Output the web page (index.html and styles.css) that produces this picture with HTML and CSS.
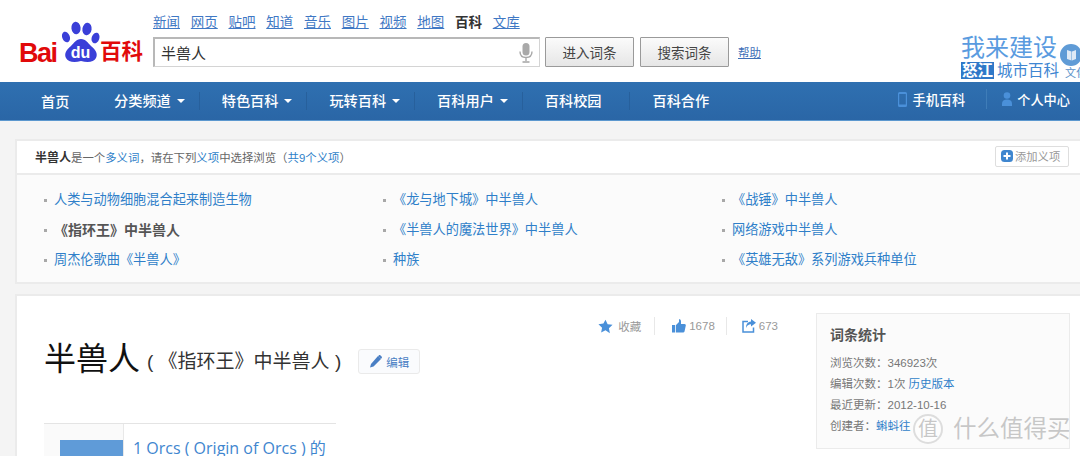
FILE: index.html
```html
<!DOCTYPE html>
<html lang="zh-CN">
<head>
  <meta charset="UTF-8">
  <title>半兽人_百度百科</title>
  <link rel="stylesheet" href="styles.css">
</head>
<body>
  <div class="page">
    <div class="top">
      <a class="logo">
        <span class="logo-bai">Bai</span>
        <span class="logo-paw">
          <svg width="39" height="42" viewBox="0 0 39 42">
            <g fill="#3a3fd8">
              <ellipse cx="5" cy="16" rx="3.800" ry="5.500" transform="rotate(-20 5 16)"/>
              <ellipse cx="15" cy="7" rx="4.600" ry="6.300" transform="rotate(-6 15 7)"/>
              <ellipse cx="26" cy="8" rx="4.600" ry="6.300" transform="rotate(8 26 8)"/>
              <ellipse cx="34.500" cy="17" rx="3.800" ry="5.500" transform="rotate(18 34.500 17)"/>
              <path d="M20 18c5 0 7 4 10 7 5 4 7 8 5 12-2 4-8 5-15 3-7 2-13 1-15-3-2-4 0-8 5-12 3-3 5-7 10-7z"/>
            </g>
          </svg>
          <span class="logo-du">du</span>
        </span>
        <span class="logo-bk">百科</span>
      </a>
      <div class="search-col">
        <div class="channels">
          <a>新闻</a><a>网页</a><a>贴吧</a><a>知道</a><a>音乐</a><a>图片</a><a>视频</a><a>地图</a><b>百科</b><a>文库</a>
        </div>
        <div class="search-row">
          <div class="search-box">
            <span>半兽人</span>
            <svg width="14" height="20" viewBox="0 0 14 20" fill="none">
              <rect x="3.500" y="0" width="7" height="12.500" rx="3.500" fill="#a9a9a9"/>
              <path d="M1 8.500c0 4 2.500 6 6 6s6-2 6-6M7 14.500V18" stroke="#a9a9a9" stroke-width="1.400"/>
              <path d="M3.500 19h7" stroke="#a9a9a9" stroke-width="1.600"/>
            </svg>
          </div>
          <button class="btn">进入词条</button>
          <button class="btn">搜索词条</button>
          <a class="help">帮助</a>
        </div>
      </div>
      <div class="promo">
        <div class="promo-text">
          <div class="promo-big">我来建设</div>
          <div class="promo-small"><span class="promo-city">怒江</span>城市百科</div>
        </div>
        <div class="promo-side">
          <span class="promo-dot">
            <svg width="11" height="12" viewBox="0 0 11 12"><path d="M1 1l4.500 1.500V11.500L1 10zM6 2.500L10 1v9l-4 1.500z" fill="#dfeaf6"/></svg>
          </span>
          <span class="promo-label">文化</span>
        </div>
      </div>
    </div>

    <div class="nav">
      <a class="nav-home">首页</a>
      <a class="nav-item">分类频道<i class="caret"></i></a>
      <a class="nav-item">特色百科<i class="caret"></i></a>
      <a class="nav-item">玩转百科<i class="caret"></i></a>
      <a class="nav-item">百科用户<i class="caret"></i></a>
      <a class="nav-item">百科校园</a>
      <a class="nav-item nav-last">百科合作</a>
      <div class="nav-right">
        <a class="nav-user nav-phone">
          <svg width="9" height="15" viewBox="0 0 9 15"><path d="M1.500 0h6A1.500 1.500 0 0 1 9 1.500v12A1.500 1.500 0 0 1 7.500 15h-6A1.500 1.500 0 0 1 0 13.500v-12A1.500 1.500 0 0 1 1.500 0zM1.200 2v10.500h6.600V2z" fill="#4a90d9"/></svg>
          手机百科
        </a>
        <a class="nav-user nav-center">
          <svg width="10" height="14" viewBox="0 0 10 14"><circle cx="5" cy="3.500" r="3.300" fill="#4a90d9"/><path d="M0 14v-2.500C0 9 2 7.500 5 7.500s5 1.500 5 4V14z" fill="#4a90d9"/></svg>
          个人中心
        </a>
      </div>
    </div>

    <div class="content">
      <div class="card poly">
        <div class="poly-head">
          <p><b>半兽人</b>是一个<a>多义词</a>，请在下列<a>义项</a>中选择浏览（<a>共9个义项</a>）</p>
          <span class="add-btn">
            <svg width="12" height="12" viewBox="0 0 12 12"><rect width="12" height="12" rx="3.500" fill="#3f86cf"/><path d="M6 2.500v7M2.500 6h7" stroke="#fff" stroke-width="2"/></svg>
            添加义项
          </span>
        </div>
        <ul class="poly-list">
          <li><a>人类与动物细胞混合起来制造生物</a></li>
          <li><a>《龙与地下城》中半兽人</a></li>
          <li><a>《战锤》中半兽人</a></li>
          <li><b>《指环王》中半兽人</b></li>
          <li><a>《半兽人的魔法世界》中半兽人</a></li>
          <li><a>网络游戏中半兽人</a></li>
          <li><a>周杰伦歌曲《半兽人》</a></li>
          <li><a>种族</a></li>
          <li><a>《英雄无敌》系列游戏兵种单位</a></li>
        </ul>
      </div>

      <div class="card article">
        <div class="article-main">
          <div class="actions">
            <span class="action act-fav">
              <svg width="15" height="15" viewBox="0 0 24 24"><path d="M12 1l3.400 7.300 7.900 1-5.800 5.500 1.500 7.900L12 18l-7 3.700 1.500-7.900L.7 8.300l7.900-1z" fill="#4a90d9"/></svg>
              收藏
            </span>
            <span class="action act-like">
              <svg width="14" height="14" viewBox="0 0 14 14"><path d="M0 6h3v7.500H0zM3.800 6.200L7 3V.5C7 0 9 0 9 2.500V5h3.500c1 0 1.500.8 1.300 1.600L12.500 12.500c-.2.700-.7 1-1.300 1H3.800z" fill="#4a90d9"/></svg>
              1678
            </span>
            <span class="action act-share">
              <svg width="14" height="14" viewBox="0 0 14 14" fill="none"><path d="M6 2.500H1v10.500h10.500V8.500" stroke="#4a90d9" stroke-width="1.500"/><path d="M9 0l5 3.800-5 3.800V5.300C6.500 5.300 5 6.500 4 9c0-4 2-6.200 5-6.500z" fill="#4a90d9"/></svg>
              673
            </span>
          </div>
          <div class="title-row">
            <h1>半兽人</h1>
            <h2>( 《指环王》中半兽人 )</h2>
            <a class="edit-btn">
              <svg width="13" height="13" viewBox="0 0 13 13"><path d="M9 1l3 3-7.500 7.500L1 12.500l1-3.500zM9.800.4c.5-.5 1.200-.5 1.700 0l1.100 1.100c.5.500.5 1.200 0 1.700l-.6.600-2.800-2.800z" fill="#4a7fc4"/></svg>
              编辑
            </a>
          </div>
          <div class="toc">
            <div class="toc-side"><span class="toc-mark"></span></div>
            <a class="toc-link">1 Orcs ( Origin of Orcs ) 的</a>
          </div>
        </div>
        <aside class="stats">
          <h3>词条统计</h3>
          <p>浏览次数：346923次</p>
          <p>编辑次数：1次 <a>历史版本</a></p>
          <p>最近更新：2012-10-16</p>
          <p>创建者：<a>蝌蚪往</a></p>
        </aside>
      </div>
    </div>

    <div class="watermark">
      <span class="wm-circle">值</span>
      <span>什么值得买</span>
    </div>
  </div>
</body>
</html>
```

FILE: styles.css
```css
* {
  box-sizing: border-box;
}

body {
  margin: 0;
  font-family: "Liberation Sans", "Noto Sans CJK SC", sans-serif;
  color: #333;
}

a {
  color: #2f7fc9;
  text-decoration: none;
}

p, h1, h2, h3, ul {
  margin: 0;
  padding: 0;
}

.page {
  position: relative;
  width: 1080px;
  height: 456px;
  overflow: hidden;
  background: #f4f4f4;
}

.top {
  display: flex;
  height: 82px;
  padding-left: 19px;
  background: #fff;
}

.logo {
  flex: none;
  display: flex;
  align-items: flex-end;
  width: 134px;
  height: 42px;
  margin-top: 21px;
  color: #e10a0a;
  font-weight: bold;
}

.logo-bai {
  width: 37px;
  font-size: 27px;
  line-height: 19px;
  letter-spacing: -1.500px;
}

.logo-paw {
  position: relative;
  width: 39px;
  height: 42px;
  margin-left: 5px;
}

.logo-du {
  position: absolute;
  left: 0;
  right: 0;
  bottom: 4px;
  color: #fff;
  font-size: 16px;
  line-height: 12px;
  text-align: center;
}

.logo-bk {
  margin-bottom: 1px;
  font-size: 21.500px;
  line-height: 20px;
  white-space: nowrap;
}

.search-col {
  flex: none;
  width: 620px;
}

.channels {
  display: flex;
  gap: 10.750px;
  height: 37px;
  padding-top: 13px;
  font-size: 13.500px;
  line-height: 19px;
}

.channels a {
  color: #3f78c4;
  text-decoration: underline;
}

.channels b {
  color: #333;
}

.search-row {
  display: flex;
  align-items: center;
}

.search-box {
  display: flex;
  align-items: center;
  justify-content: space-between;
  width: 387px;
  height: 30px;
  padding: 0 6px 0 6px;
  border: 1px solid #d4d4d4;
  border-top: 2px solid #b8b8b8;
  border-left: 2px solid #b8b8b8;
  background: #fff;
  font-size: 15px;
  color: #333;
}

.btn {
  width: 89px;
  height: 30px;
  margin-left: 5px;
  padding: 0;
  border: 1px solid #9a9a9a;
  border-radius: 1px;
  background: linear-gradient(#fbfbfb, #e6e6e6);
  font-family: inherit;
  font-size: 13.500px;
  color: #444;
}

.btn + .btn {
  margin-left: 6px;
}

.help {
  margin-left: 9px;
  color: #3f6fb8;
  font-size: 11.500px;
  text-decoration: underline;
}

.promo {
  flex: none;
  display: flex;
  margin-left: 188px;
  padding-top: 34px;
}

.promo-text {
  width: 99px;
  white-space: nowrap;
}

.promo-big {
  color: #5a9bdf;
  font-size: 24px;
  line-height: 28px;
}

.promo-small {
  display: flex;
  align-items: center;
  color: #3f86d2;
  font-size: 15.500px;
  line-height: 17px;
}

.promo-city {
  margin-right: 3px;
  padding: 0 1px;
  background: #2f78c8;
  color: #fff;
  font-weight: bold;
}

.promo-side {
  flex: none;
  display: flex;
  flex-direction: column;
  width: 30px;
  padding-top: 10px;
}

.promo-dot {
  display: flex;
  align-items: center;
  justify-content: center;
  width: 22px;
  height: 22px;
  border-radius: 50%;
  background: #5f9bd6;
}

.promo-label {
  margin: 0 0 0 5px;
  color: #5a90c8;
  font-size: 11px;
  line-height: 14px;
  white-space: nowrap;
}

.nav {
  display: flex;
  align-items: center;
  height: 39px;
  padding: 0 0 1px 41px;
  background: linear-gradient(#2f70b1, #2a66a6);
  border-bottom: 1px solid #5c98cf;
}

.nav a {
  color: #fff;
  font-size: 14.200px;
  font-weight: 500;
  white-space: nowrap;
}

.nav-home {
  width: 51px;
}

.nav-item {
  display: flex;
  align-items: center;
  width: 107.700px;
  height: 18px;
  padding-left: 22px;
  border-right: 1px solid #27609c;
  line-height: 18px;
}

.nav-last {
  border-right: 0;
}

.caret {
  width: 0;
  height: 0;
  margin-left: 6px;
  border-top: 4px solid #fff;
  border-left: 4px solid transparent;
  border-right: 4px solid transparent;
}

.nav-right {
  display: flex;
  margin-left: auto;
  margin-right: 10px;
  margin-bottom: 3px;
}

.nav .nav-user {
  display: flex;
  align-items: center;
  gap: 6px;
  height: 20px;
  font-size: 13.200px;
}

.nav .nav-phone {
  padding-right: 21px;
  margin-right: 15px;
  border-right: 1px solid #3f7db8;
}

.nav .nav-center {
  gap: 5px;
}

.content {
  width: 1090px;
  padding: 18px 0 0 15px;
}

.card {
  border: 2px solid #ebebeb;
  border-right: 0;
  background: #fff;
}

.poly-head {
  display: flex;
  align-items: center;
  justify-content: space-between;
  height: 34px;
  padding: 0 21px 2px 18px;
  border-bottom: 2px solid #ebebeb;
  font-size: 11.400px;
  color: #666;
}

.poly-head b {
  color: #333;
  font-size: 12px;
}

.add-btn {
  display: flex;
  align-items: center;
  gap: 2px;
  width: 74px;
  height: 21px;
  padding-left: 5px;
  border: 1px solid #dedede;
  border-radius: 2px;
  color: #999;
  font-size: 11.300px;
}

.poly-list {
  display: grid;
  grid-template-columns: repeat(3, 339px);
  grid-auto-rows: 30px;
  height: 107px;
  padding: 10px 0 0 27px;
  background: #fbfbfb;
  list-style: none;
  font-size: 13.200px;
  line-height: 30px;
}

.poly-list li {
  display: flex;
  align-items: center;
  gap: 7px;
  white-space: nowrap;
}

.poly-list li::before {
  content: "";
  width: 3px;
  height: 3px;
  background: #a8a8a8;
}

.poly-list b {
  color: #555;
  font-size: 14px;
}

.article {
  display: flex;
  height: 170px;
  margin-top: 10px;
  border-bottom: 0;
}

.article-main {
  flex: none;
  width: 799px;
  padding-left: 27px;
}

.actions {
  display: flex;
  justify-content: flex-end;
  height: 41px;
  padding: 21px 38px 0 0;
}

.action {
  display: flex;
  align-items: center;
  gap: 3px;
  height: 18px;
  border-right: 1px solid #e8e8e8;
  color: #999;
  font-size: 11.500px;
}

.act-fav {
  gap: 5px;
  padding-right: 13px;
}

.act-like {
  padding: 0 11px 0 17px;
}

.act-share {
  padding-left: 15px;
  border-right: 0;
}

.title-row {
  display: flex;
  align-items: center;
  height: 44px;
}

.title-row h1 {
  font-size: 32px;
  font-weight: 400;
  color: #111;
  line-height: 44px;
}

.title-row h2 {
  margin: 6px 0 0 7px;
  font-size: 19px;
  font-weight: 400;
  line-height: 26px;
  color: #333;
  white-space: nowrap;
}

.edit-btn {
  display: flex;
  align-items: center;
  justify-content: center;
  gap: 4px;
  width: 62px;
  height: 25px;
  margin: 5px 0 0 17px;
  border: 1px solid #eaeaea;
  border-radius: 3px;
  background: #fafbfd;
  font-size: 11.500px;
  color: #4a7fc4;
}

.toc {
  display: flex;
  width: 292px;
  height: 80px;
  margin-top: 42px;
  border-top: 1px solid #e4e4e4;
}

.toc-side {
  flex: none;
  width: 80px;
  padding: 16px 0 0 16px;
  background: #fafafa;
  border-right: 1px solid #e8e8e8;
}

.toc-mark {
  display: block;
  height: 40px;
  background: #5f9bd8;
}

.toc-link {
  padding: 13px 0 0 9px;
  font-family: "Open Sans", "Noto Sans CJK SC", sans-serif;
  font-size: 16px;
  line-height: 22px;
  white-space: nowrap;
  color: #3f86cf;
}

.stats {
  flex: none;
  width: 254px;
  height: 136px;
  margin-top: 17px;
  padding: 11px 0 0 13px;
  border: 1px solid #ebebeb;
  background: #fbfbfb;
  font-size: 11.500px;
  line-height: 21px;
  color: #777;
}

.stats h3 {
  margin-bottom: 8px;
  font-size: 14px;
  line-height: 20px;
  color: #555;
}

.stats a {
  color: #2f7fc9;
}

.watermark {
  position: absolute;
  left: 913px;
  top: 414px;
  display: flex;
  align-items: center;
  gap: 10px;
  width: 180px;
  color: rgba(190, 190, 190, 0.85);
  font-size: 23.500px;
  line-height: 30px;
  white-space: nowrap;
}

.wm-circle {
  display: flex;
  align-items: center;
  justify-content: center;
  width: 30px;
  height: 30px;
  border: 2px solid rgba(215, 215, 215, 0.85);
  border-radius: 50%;
  background: rgba(255, 255, 255, 0.6);
  font-size: 20px;
}
```
